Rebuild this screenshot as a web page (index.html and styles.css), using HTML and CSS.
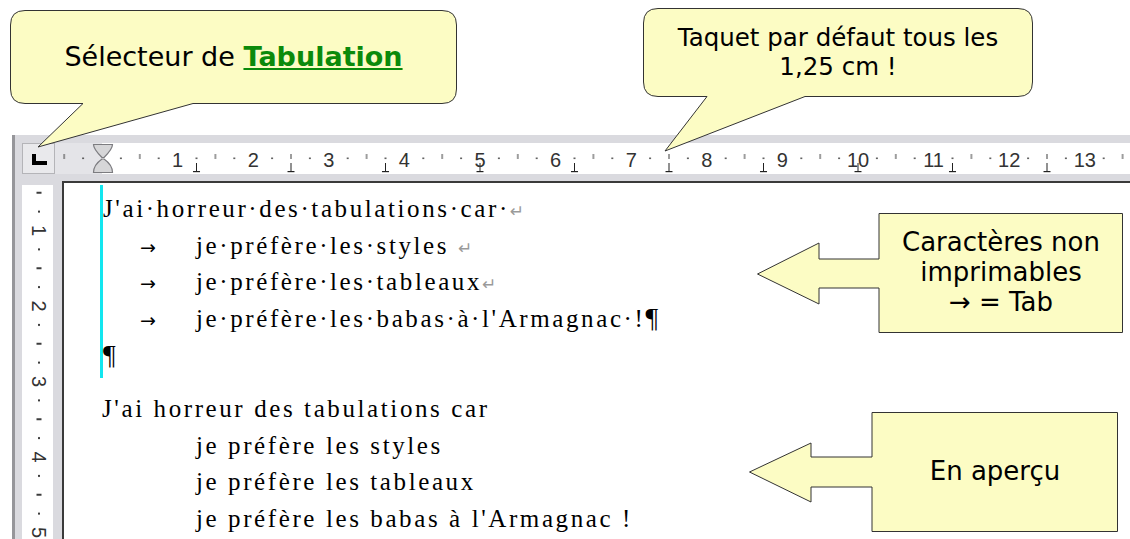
FILE: index.html
```html
<!DOCTYPE html>
<html lang="fr">
<head>
  <meta charset="UTF-8" />
  <title>Tabulations</title>
  <link rel="stylesheet" href="styles.css">
</head>
<body>
<div class="page">

  <div class="editor">
    <div class="topbar">
      <div class="tabsel"><span class="tabsel-l"></span></div>
      <svg class="hruler" width="1075" height="31" viewBox="0 0 1075 31">
        <defs>
          <pattern id="hquarter" patternUnits="userSpaceOnUse" x="47" y="0" width="75.6" height="31">
            <rect class="mark" x="18.1" y="14.5" width="1.6" height="1.6"/>
            <rect class="mark" x="37.3" y="11" width="1" height="5"/>
            <rect class="mark" x="55.9" y="14.5" width="1.6" height="1.6"/>
          </pattern>
          <pattern id="htab" patternUnits="userSpaceOnUse" x="-0.25" y="0" width="94.5" height="31">
            <rect class="tabmark" x="46.75" y="20" width="1" height="9"/>
            <rect class="tabmark" x="43.75" y="28" width="7" height="1.2"/>
          </pattern>
        </defs>
        <rect x="0" y="0" width="47" height="31" fill="#e4e4e8"/>
        <rect x="0" y="0" width="1075" height="31" fill="url(#hquarter)"/>
        <rect x="100" y="0" width="975" height="31" fill="url(#htab)"/>
        <path class="indent" d="M38.5,1.5 H57.5 Q57.5,6 49,14.5 H47 Q38.5,6 38.5,1.5 Z"/>
        <path class="indent" d="M47,16 H49 Q57.5,22 57.5,29.5 H38.5 Q38.5,22 47,16 Z"/>
        <g class="rnum">
          <text x="122.6" y="23.5">1</text>
          <text x="198.2" y="23.5">2</text>
          <text x="273.8" y="23.5">3</text>
          <text x="349.4" y="23.5">4</text>
          <text x="425" y="23.5">5</text>
          <text x="500.6" y="23.5">6</text>
          <text x="576.2" y="23.5">7</text>
          <text x="651.8" y="23.5">8</text>
          <text x="727.4" y="23.5">9</text>
          <text x="803" y="23.5">10</text>
          <text x="878.6" y="23.5">11</text>
          <text x="954.2" y="23.5">12</text>
          <text x="1029.8" y="23.5">13</text>
        </g>
      </svg>
    </div>

    <div class="workarea">
      <div class="vruler">
        <svg width="31" height="354" viewBox="0 0 31 354">
          <defs>
            <pattern id="vquarter" patternUnits="userSpaceOnUse" x="0" y="-30" width="31" height="75.5">
              <rect class="mark" x="16" y="17.9" width="2" height="2"/>
              <rect class="mark" x="14.5" y="36.75" width="5" height="2"/>
              <rect class="mark" x="16" y="55.6" width="2" height="2"/>
            </pattern>
          </defs>
          <rect x="0" y="0" width="31" height="354" fill="url(#vquarter)"/>
          <g class="rnum vnum">
            <text x="17" y="45.5" transform="rotate(90 17 45.5)">1</text>
            <text x="17" y="121" transform="rotate(90 17 121)">2</text>
            <text x="17" y="196.5" transform="rotate(90 17 196.5)">3</text>
            <text x="17" y="272" transform="rotate(90 17 272)">4</text>
            <text x="17" y="347.5" transform="rotate(90 17 347.5)">5</text>
          </g>
        </svg>
      </div>

      <div class="doc">
        <div class="para para-marks">
          <p class="line">J'ai·horreur·des·tabulations·car·<span class="nl">↵</span></p>
          <p class="line"><span class="tab">→</span>je·préfère·les·styles <span class="nl">↵</span></p>
          <p class="line"><span class="tab">→</span>je·préfère·les·tableaux<span class="nl">↵</span></p>
          <p class="line"><span class="tab">→</span>je·préfère·les·babas·à·l'Armagnac·!<span class="pilcrow">¶</span></p>
          <p class="line"><span class="pilcrow">¶</span></p>
        </div>
        <div class="para para-preview">
          <p class="line">J'ai horreur des tabulations car</p>
          <p class="line indented">je préfère les styles</p>
          <p class="line indented">je préfère les tableaux</p>
          <p class="line indented">je préfère les babas à l'Armagnac !</p>
        </div>
      </div>
    </div>
  </div>

  <div class="callout callout-tab">
    <svg class="callout-shape" width="447" height="138">
      <path d="M15,0.5 H432 Q446.5,0.5 446.5,15 V79 Q446.5,93.5 432,93.5 H183 L28,137 L73,93.5 H15 Q0.5,93.5 0.5,79 V15 Q0.5,0.5 15,0.5 Z"/>
    </svg>
    <p class="callout-text"><span>Sélecteur de <b class="accent">Tabulation</b></span></p>
  </div>

  <div class="callout callout-taquet">
    <svg class="callout-shape" width="390" height="144">
      <path d="M15,0.5 H375 Q389.5,0.5 389.5,15 V74 Q389.5,88.5 375,88.5 H162 L22,143 L64,88.5 H15 Q0.5,88.5 0.5,74 V15 Q0.5,0.5 15,0.5 Z"/>
    </svg>
    <p class="callout-text"><span>Taquet par défaut tous les<br>1,25 cm !</span></p>
  </div>

  <div class="callout callout-marks">
    <svg class="callout-shape" width="366" height="120">
      <path d="M122,0.5 H365.5 V119.5 H122 V75 H62 V91 L0.5,61 L62,30 V46 H122 Z"/>
    </svg>
    <p class="callout-text"><span>Caractères non<br>imprimables<br>→ = Tab</span></p>
  </div>

  <div class="callout callout-preview">
    <svg class="callout-shape" width="369" height="120">
      <path d="M123,0.5 H368.5 V119.5 H123 V75 H62 V90 L0.5,60 L62,31 V45 H123 Z"/>
    </svg>
    <p class="callout-text"><span>En aperçu</span></p>
  </div>

</div>
</body>
</html>
```

FILE: styles.css
```css
* { box-sizing: border-box; }
html, body { margin: 0; }
body {
  background: #fff;
  overflow: hidden;
  font-family: "DejaVu Sans", sans-serif;
}

.page {
  position: relative;
  width: 1130px;
  height: 539px;
  padding: 135px 0 0 12px;
  overflow: hidden;
}

/* editor frame */
.editor {
  height: 404px;
  border-left: 3px solid #96969a;
  background: #dadadf;
  display: flex;
  flex-direction: column;
}

.topbar {
  display: flex;
  flex: none;
  height: 46px;
  padding: 8px 0 0 7px;
}

.tabsel {
  width: 33px;
  height: 31px;
  background: #e9e9ec;
  border: 1px solid #b4b4b8;
  display: flex;
  align-items: center;
  justify-content: center;
}
.tabsel-l {
  width: 15px;
  height: 11px;
  margin: 2px 0 0 2px;
  border-left: 4px solid #000;
  border-bottom: 4px solid #000;
}

.hruler { display: block; flex: none; background: #fff; }
.mark { fill: #3c3c3c; }
.tabmark { fill: #222; }
.indent { fill: #d6d6d8; stroke: #7c7c80; stroke-width: 1.2; }
.rnum {
  font-family: "Liberation Sans", sans-serif;
  font-size: 20px;
  fill: #333;
  text-anchor: middle;
}
.vnum { dominant-baseline: central; }

.workarea { flex: 1; display: flex; min-height: 0; }
.vruler { width: 47px; flex: none; padding: 4px 0 0 7px; }
.vruler svg { display: block; background: #fff; }

/* document */
.doc {
  flex: 1;
  background: #fff;
  border-top: 2px solid #3a3a3a;
  border-left: 2px solid #3a3a3a;
  font-family: "Liberation Serif", serif;
  font-size: 25px;
  letter-spacing: 2.6px;
  color: #000;
}

.para-marks {
  margin: 2px 0 0 36px;
  padding: 6px 0 3.5px;
  border-left: 3px solid #12e6ef;
}
.para-preview { margin: 13px 0 0 38px; }

.line {
  margin: 0;
  height: 36.7px;
  line-height: 36.7px;
  white-space: pre;
}
.indented { padding-left: 94px; }

.tab {
  display: inline-block;
  width: 93px;
  padding-left: 37px;
  font: 19px "DejaVu Sans", sans-serif;
  letter-spacing: 0;
  line-height: 1;
}
.nl {
  font: 17px "DejaVu Sans", sans-serif;
  color: #9a9a9a;
  letter-spacing: 0;
  line-height: 1;
}
.pilcrow { font-size: 28px; line-height: 1; letter-spacing: 0; }

/* callouts */
.callout {
  position: absolute;
  font-size: 26px;
  line-height: 1.15;
  color: #000;
}
.callout-shape { position: absolute; left: 0; top: 0; overflow: visible; }
.callout-shape path { fill: #fcfcc4; stroke: #333; stroke-width: 1; }
.callout-text {
  position: relative;
  height: 100%;
  margin: 0;
  display: flex;
  align-items: center;
  justify-content: center;
  text-align: center;
}
.accent { color: #0b8a0b; text-decoration: underline; }

.callout-tab { left: 10px; top: 10px; width: 447px; height: 94px; font-size: 27px; }
.callout-taquet { left: 643px; top: 8px; width: 390px; height: 89px; font-size: 24.5px; }
.callout-marks { left: 757px; top: 213px; width: 366px; height: 120px; padding-left: 122px; }
.callout-preview { left: 749px; top: 412px; width: 369px; height: 120px; padding-left: 123px; }
```
